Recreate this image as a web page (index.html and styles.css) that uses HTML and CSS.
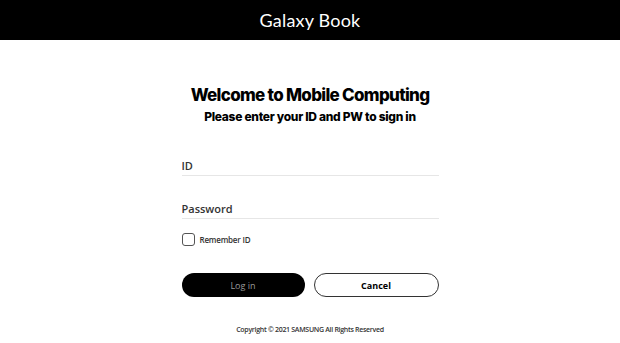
FILE: index.html
```html
<!DOCTYPE html>
<html lang="en">
<head>
    <meta charset="UTF-8">
    <meta name="viewport" content="width=device-width, initial-scale=1.0">
    <title>Galaxy Book</title>
    <link rel="stylesheet" href="styles.css">
</head>
<body>
    <div class="header">
        <span class="brand">Galaxy Book</span>
    </div>
    <div class="main">
        <h1 class="title">Welcome to Mobile Computing</h1>
        <h2 class="subtitle">Please enter your ID and PW to sign in</h2>
        <form class="login-form">
            <label class="field">
                <input type="text" placeholder="ID">
            </label>
            <label class="field">
                <input type="password" placeholder="Password">
            </label>
            <label class="remember">
                <input type="checkbox">
                <span class="box"></span>
                <span>Remember ID</span>
            </label>
            <div class="buttons">
                <button type="button" class="btn btn-login">Log in</button>
                <button type="button" class="btn btn-cancel">Cancel</button>
            </div>
        </form>
        <div class="copyright">Copyright &copy; 2021 SAMSUNG All Rights Reserved</div>
    </div>
</body>
</html>
```

FILE: styles.css
```css
body, html {
    margin: 0;
    background: #fff;
    font-family: "Inter", "Liberation Sans", sans-serif;
    color: #000;
}

.header {
    height: 40px;
    background: #000;
    display: flex;
    justify-content: center;
    align-items: center;
}

.brand {
    color: #fff;
    font-family: "Lato", sans-serif;
    font-size: 18px;
    letter-spacing: 0.2px;
}

.main {
    display: flex;
    flex-direction: column;
    align-items: center;
}

.title {
    margin: 43px 0 0;
    font-size: 17px;
    font-weight: 800;
    letter-spacing: -0.7px;
    line-height: 24px;
}

.subtitle {
    margin: 0;
    font-size: 12px;
    font-weight: 800;
    letter-spacing: -0.3px;
    line-height: 20px;
}

.login-form {
    width: 257px;
    margin-top: 17px;
    display: flex;
    flex-direction: column;
}

.field {
    display: block;
    border-bottom: 1px solid #e6e6e6;
    margin-top: 10px;
}

.field + .field {
    margin-top: 21px;
}

.field input {
    border: none;
    outline: none;
    width: 100%;
    padding: 0 0 1px;
    font-family: "Open Sans", sans-serif;
    font-size: 11px;
    font-weight: 600;
    line-height: 16px;
    color: #222;
    background: transparent;
}

.field input::placeholder {
    color: #333;
}

.remember {
    display: flex;
    align-items: center;
    gap: 5px;
    margin-top: 14px;
    font-family: "Open Sans", sans-serif;
    font-size: 8px;
    font-weight: 600;
    color: #333;
    letter-spacing: -0.2px;
}

.remember input {
    display: none;
}

.remember .box {
    width: 11px;
    height: 11px;
    border: 1px solid #555;
    border-radius: 3px;
}

.buttons {
    display: flex;
    gap: 9px;
    margin-top: 27px;
}

.btn {
    flex: 1;
    height: 24px;
    border-radius: 12px;
    font-family: "Open Sans", sans-serif;
    font-size: 9px;
    cursor: pointer;
}

.btn-login {
    background: #000;
    border: none;
    color: #9a9a9a;
}

.btn-cancel {
    background: #fff;
    border: 1.5px solid #333;
    color: #000;
    font-weight: 700;
}

.copyright {
    margin-top: 28px;
    font-family: "Open Sans", sans-serif;
    font-size: 7px;
    font-weight: 600;
    color: #333;
    letter-spacing: -0.3px;
}
```
